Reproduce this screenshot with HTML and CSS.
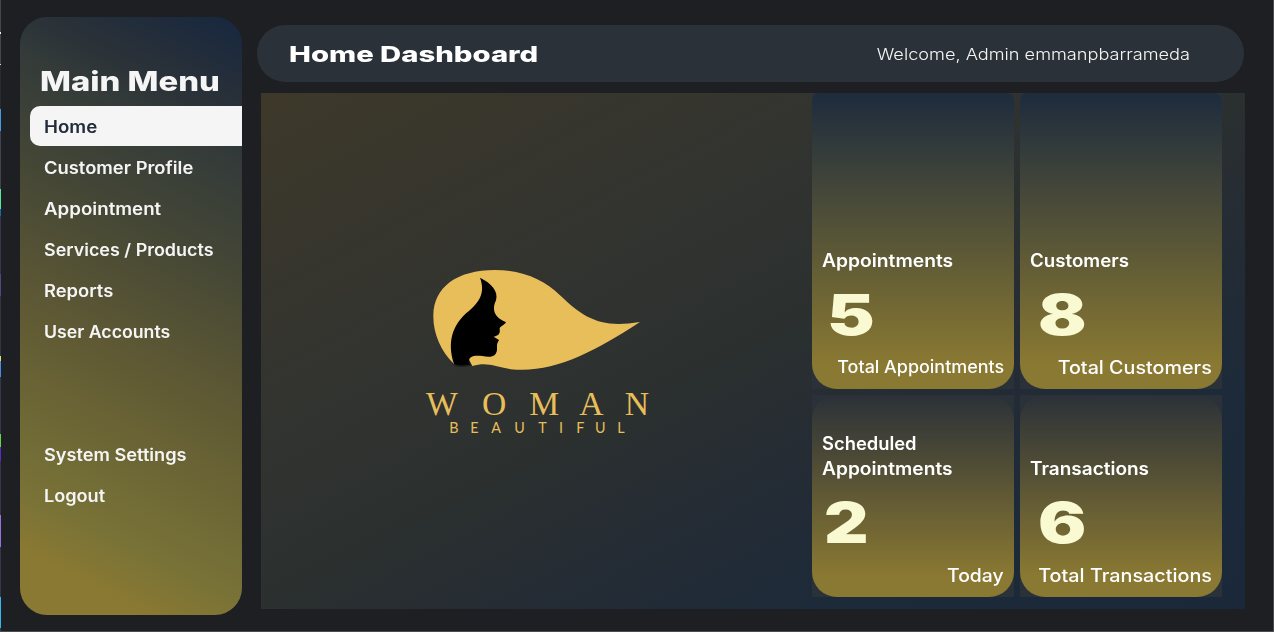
FILE: index.html
```html
<!DOCTYPE html>
<html lang="en">
<head>
<meta charset="utf-8">
<title>Home Dashboard</title>
<link rel="stylesheet" href="styles.css">
</head>
<body>
<div class="edge"></div>
<aside class="sidebar">
  <h1 class="menu-title"><span>Main Menu</span></h1>
  <nav class="nav">
    <a class="nav-item active"><span>Home</span></a>
    <a class="nav-item"><span>Customer Profile</span></a>
    <a class="nav-item"><span>Appointment</span></a>
    <a class="nav-item"><span>Services / Products</span></a>
    <a class="nav-item"><span>Reports</span></a>
    <a class="nav-item"><span>User Accounts</span></a>
    <a class="nav-item lower"><span>System Settings</span></a>
    <a class="nav-item"><span>Logout</span></a>
  </nav>
</aside>
<main class="main">
  <header class="header">
    <h2 class="page-title"><span>Home Dashboard</span></h2>
    <p class="welcome"><span>Welcome, Admin emmanpbarrameda</span></p>
  </header>
  <section class="panel">
    <div class="brand">
      <svg class="logo" viewBox="0 0 720 540" width="240" height="180">
        <defs><filter id="soft"><feGaussianBlur stdDeviation="5"/></filter></defs>
        <ellipse cx="126" cy="309" rx="24" ry="9" filter="url(#soft)"/>
        <path fill="#e8be5a" d="M102 312C62 272 39 220 40 165C42 82 110 30 225 30C312 31 372 60 420 106C492 174 540 206 660 186C590 232 540 260 480 288C415 316 360 330 300 329C232 328 212 302 157 318L145 295Z"/>
        <path d="M180 53C214 69 236 94 228 121C214 150 224 173 258 187C254 195 238 200 239 207C241 221 237 226 221 230L237 240C228 255 232 258 231 270C228 294 205 292 187 288C162 285 145 289 147 306C148 313 152 317 157 318C142 310 120 318 102 312C85 262 88 206 138 160C178 128 197 100 180 53Z"/>
        <text class="logo-name" x="18 186 328 478 614" y="465">WOMAN</text>
        <text class="logo-sub" x="88 151 214 283 355 417 469 525 592" y="518">BEAUTIFUL</text>
      </svg>
    </div>
    <div class="cards">
      <article class="card tall appointments"><div class="card-body"><h3><span>Appointments</span></h3><strong><span>5</span></strong><p><span>Total Appointments</span></p></div></article>
      <article class="card tall customers"><div class="card-body"><h3><span>Customers</span></h3><strong><span>8</span></strong><p><span>Total Customers</span></p></div></article>
      <article class="card scheduled"><div class="card-body"><h3><span class="first-line">Scheduled</span><br><span>Appointments</span></h3><strong><span>2</span></strong><p><span>Today</span></p></div></article>
      <article class="card transactions"><div class="card-body"><h3><span>Transactions</span></h3><strong><span>6</span></strong><p><span>Total Transactions</span></p></div></article>
    </div>
  </section>
</main>
</body>
</html>
```
FILE: styles.css
```css
* { box-sizing: border-box; margin: 0; padding: 0; }
body {
  width: 1274px; height: 632px; overflow: hidden; display: flex;
  background: #1e1f23; color: #f5f5f5;
  font-family: Inter, "Noto Sans", sans-serif;
  border-right: 1px solid #4b4c50; border-bottom: 1px solid #4b4c50;
}
/* Labels are widened horizontally from their starting edge. */
span { display: inline-block; transform: scaleX(var(--sx, 1)); transform-origin: left center; }
.edge {
  width: 1px; height: 631px; flex: none;
  background: linear-gradient(#45464f 0 32px, #eee 32px 34px, #45464f 34px 64px, #ddd 64px 65px, #292a32 65px 109px, #3d9de8 109px 131px, #41424d 131px 189px, #55eb9b 189px 209px, #2462b5 209px 216px, #343747 216px 274px, #514780 274px 296px, #303542 296px 356px, #e2dc6b 356px 361px, #488ce8 361px 377px, #343747 377px 434px, #62d94b 434px 447px, #5c28cf 447px 461px, #343747 461px 515px, #9474de 515px 547px, #343747 547px 597px, #35b7f5 597px 628px, #343747 628px);
}
.sidebar {
  flex: none; width: 222px; height: 598px; margin: 17.4px 14.6px 0 19.4px; padding-top: 46px;
  border-radius: 27px;
  background: linear-gradient(27deg, #8a7932 9%, #787237 18%, #605a34 43%, #424536 66%, #343b39 79%, #2a3138 86%, #17273f 100%);
}
.menu-title { --sx: 1.215; height: 43px; padding-left: 20px; font-size: 27px; line-height: 37px; font-weight: 800; }
.nav { display: flex; flex-direction: column; gap: 1px; padding-left: 10px; }
.nav-item { height: 40px; padding-left: 14px; line-height: 42px; font-size: 17px; font-weight: 600; }
.nav-item:nth-child(1) { --sx: 1.1; }
.nav-item:nth-child(2) { --sx: 1.08; }
.nav-item:nth-child(3) { --sx: 1.1; }
.nav-item:nth-child(4) { --sx: 1.055; }
.nav-item:nth-child(5) { --sx: 1.08; }
.nav-item:nth-child(6) { --sx: 1.042; }
.nav-item:nth-child(7) { --sx: 1.07; }
.nav-item:nth-child(8) { --sx: 1.065; }
.nav-item.active { background: #f5f5f5; color: #232d38; border-radius: 10px 0 0 10px; }
.nav-item.lower { margin-top: 82px; }
.main { flex: none; width: 988px; padding-top: 25px; }
.header {
  height: 57px; width: 987px; border-radius: 28px; background: #2b3138;
  display: flex; justify-content: space-between; align-items: center; padding: 0 54px 0 32px;
}
.page-title { --sx: 1.33; font-size: 22px; font-weight: 800; color: #fff; }
.welcome { --sx: 1.135; font-size: 16px; font-weight: 300; }
.welcome span { transform-origin: right center; }
.panel {
  margin: 11px 0 0 4px; width: 984px; height: 516px; display: flex; overflow: hidden;
  background: linear-gradient(152deg, #3d3829 0%, #333430 30%, #2b302f 49%, #252c34 62%, #1d2a39 78%, #1b283a 100%);
}
.brand { width: 551px; padding: 167px 0 0 159px; }
.logo { display: block; }
.logo-name { font: 101px "Liberation Serif", serif; fill: #e8be5a; }
.logo-sub { font: 43px Lato, sans-serif; fill: #e8be5a; }
.cards { display: grid; grid-template-columns: 202px 202px; grid-template-rows: 296px 202px; gap: 6px; }
.card { background: #2b3138; }
.card-body {
  height: 100%; border-radius: 25px; padding: 0 10px; color: #fff;
  display: flex; flex-direction: column; justify-content: flex-end;
  background: linear-gradient(#2b3138, #8a7932 90%);
}
.tall .card-body { border-radius: 8px 8px 25px 25px; background: linear-gradient(#1d2b3d, #8a7932 92%); }
.card h3 { font-size: 18px; line-height: 25px; font-weight: 600; }
.card strong { --sx: 1.28; height: 82px; padding-left: 8px; font-size: 56px; line-height: 85px; font-weight: 900; color: #fafad2; }
.card p { height: 34px; font-size: 18px; line-height: 25px; font-weight: 500; text-align: right; }
.card p span { transform-origin: right center; }
.appointments h3 { --sx: 1.07; }
.appointments strong { padding-left: 5px; }
.appointments p { --sx: 1.055; font-size: 17px; }
.customers h3 { --sx: 1.04; }
.customers p { --sx: 1.095; }
.scheduled h3 { --sx: 1.065; }
.scheduled .first-line { --sx: 1.02; }
.scheduled strong { --sx: 1.23; padding-left: 2px; }
.scheduled p { --sx: 1.075; }
.transactions h3 { --sx: 1.055; }
.transactions p { --sx: 1.1; }
```
